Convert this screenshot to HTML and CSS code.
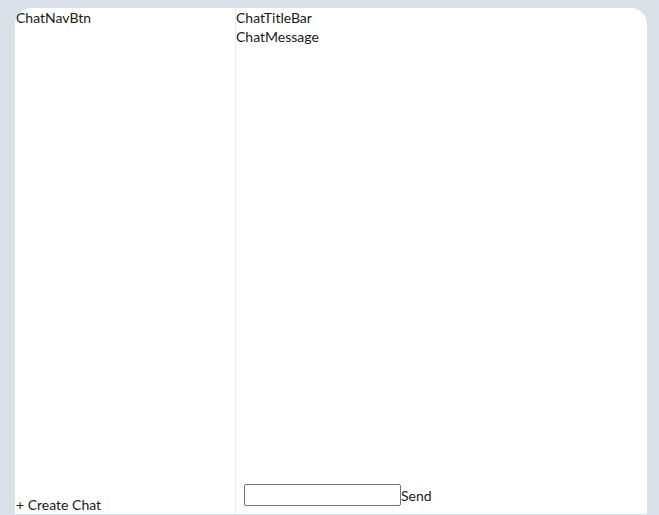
FILE: index.html
```html
<!DOCTYPE html>
<html>
<head>
<meta charset="utf-8">
<link rel="stylesheet" href="styles.css">
</head>
<body>
<div class="page">
  <div class="card">
    <aside class="nav">
      <div class="nav-btn">ChatNavBtn</div>
      <div class="create">+ Create Chat</div>
    </aside>
    <main class="chat">
      <div class="title">ChatTitleBar</div>
      <div class="messages">ChatMessage</div>
      <form class="composer">
        <input class="input" type="text">
        <span class="send">Send</span>
      </form>
    </main>
  </div>
</div>
</body>
</html>
```
FILE: styles.css
```css
html, body {
  margin: 0;
  padding: 0;
  background: #d9e0e7;
  overflow: hidden;
}
body {
  font-family: "Lato", "Noto Sans", sans-serif;
  font-size: 14px;
  line-height: 19px;
  color: #1a1a1a;
}
.page {
  height: 514px;
  border-bottom: 1px solid #c8b8b8;
  padding: 8px 12px 0 15px;
  box-sizing: content-box;
  display: flex;
}
.card {
  flex: 1;
  background: #fff;
  border-radius: 16px 16px 0 0;
  display: flex;
  height: 506px;
}
.nav {
  width: 221px;
  box-sizing: border-box;
  border-right: 1px solid #ececec;
  display: flex;
  flex-direction: column;
  justify-content: space-between;
  padding-left: 1px;
}
.create {
  padding-bottom: 0;
}
.chat {
  flex: 1;
  display: flex;
  flex-direction: column;
}
.messages {
  flex: 1;
}
.composer {
  margin: 0;
  padding: 0 0 8px 8px;
  display: flex;
  align-items: flex-end;
}
.input {
  width: 157px;
  height: 22px;
  box-sizing: border-box;
  border: 1px solid #767676;
  border-radius: 2px;
  margin: 0;
  padding: 1px 2px;
  font: inherit;
}
.send {
  line-height: 19px;
  padding-bottom: 1px;
}
```
